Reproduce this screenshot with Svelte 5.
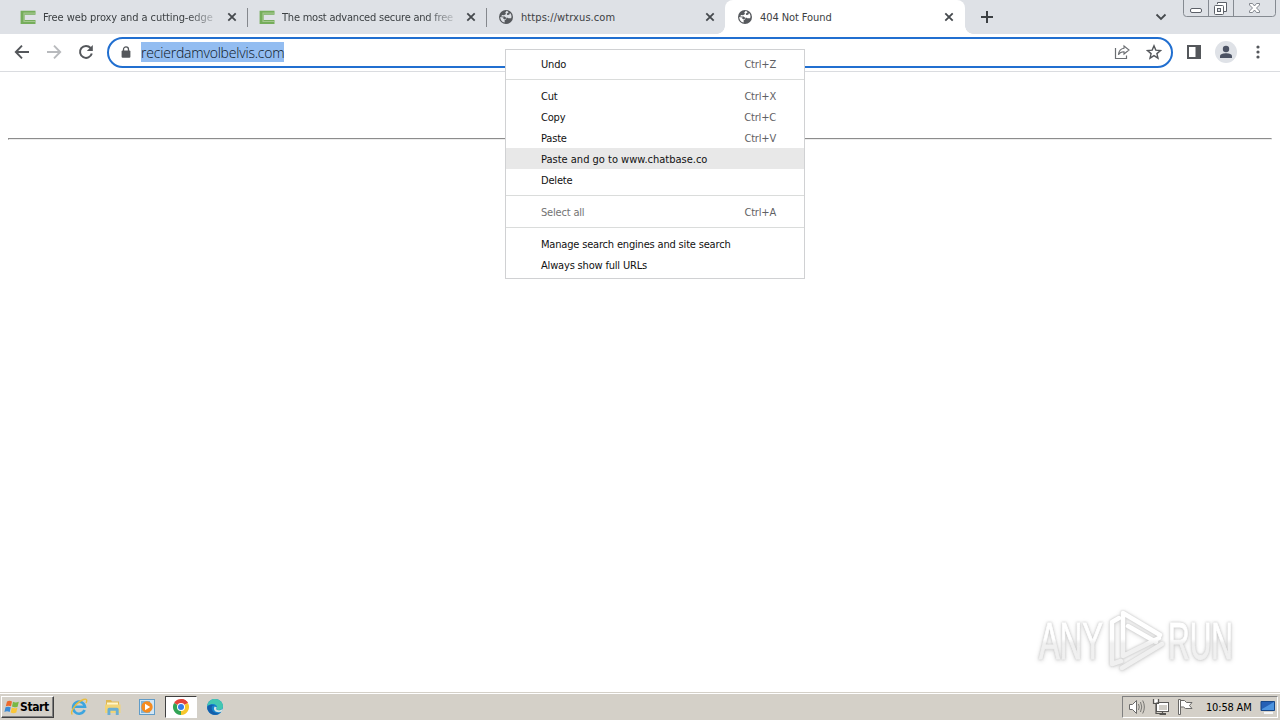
<script>
    const tabs = [
        { title: "Free web proxy and a cutting-edge", icon: "green" },
        { title: "The most advanced secure and free", icon: "green", tight: true },
        { title: "https://wtrxus.com", icon: "globe", wide: true },
        { title: "404 Not Found", icon: "globe", active: true }
    ];

    const menu = [
        [{ label: "Undo", keys: "Ctrl+Z" }],
        [
            { label: "Cut", keys: "Ctrl+X" },
            { label: "Copy", keys: "Ctrl+C" },
            { label: "Paste", keys: "Ctrl+V" },
            { label: "Paste and go to www.chatbase.co", hover: true },
            { label: "Delete" }
        ],
        [{ label: "Select all", keys: "Ctrl+A", disabled: true }],
        [
            { label: "Manage search engines and site search" },
            { label: "Always show full URLs" }
        ]
    ];
</script>

<div class="screen">
    <header class="tabstrip">
        {#each tabs as tab, i}
            <div class="tab" class:active={tab.active} class:line={i < 2}>
                {#if tab.icon === "green"}
                    <svg class="favicon" width="16" height="16" viewBox="0 0 16 16">
                        <path d="M15.5 3.7H2.6V13H15.5" fill="none" stroke="#75ad5b" stroke-width="4" />
                        <path d="M15 4.2H4V12.5H15" fill="none" stroke="#a3c78e" stroke-width="1.2" />
                    </svg>
                {:else}
                    <svg class="favicon" width="16" height="16" viewBox="0 0 16 16">
                        <circle cx="8" cy="8" r="7" fill="#56595d" />
                        <path d="M8.8 1.8 7.3 3.5 8 5 6 6.2 4 6.1 3.2 7.5 6.8 7.6 8.6 9.2 8 10.5 6.6 11.2 6.7 13.6C3.9 13 2.3 10.9 2.2 8L5.6 8.6 5.2 9.8 7 10.4 9 8.6 10.4 9.3 13.1 9.3C14 7.5 13.3 5 12 3.9L11.2 5.8 9.2 6 8.7 4.7 10.7 3.2Z" fill={tab.active ? "#fff" : "#dee1e6"} />
                    </svg>
                {/if}
                <span class="title" class:fade={i < 2} class:wide={tab.wide} class:tight={tab.tight}>{tab.title}</span>
                <svg class="close" width="10" height="10" viewBox="0 0 10 10">
                    <path d="M1.3 1.3 8.7 8.7M8.7 1.3 1.3 8.7" stroke="#45494d" stroke-width="1.8" />
                </svg>
            </div>
        {/each}
        <svg class="plus" width="12" height="12" viewBox="0 0 12 12">
            <path d="M6 0V12M0 6H12" stroke="#3c4043" stroke-width="2" />
        </svg>
        <svg class="chevron" width="12" height="8" viewBox="0 0 12 8">
            <path d="M1.5 1.5 6 6 10.5 1.5" fill="none" stroke="#45494d" stroke-width="1.8" />
        </svg>
        <svg class="controls" width="94" height="18" viewBox="0 0 94 18">
            <path d="M.5 0V13.5Q.5 16.5 3.5 16.5H89.5Q92.5 16.5 92.5 13.5V0M25.5 0V16M50.5 0V16" fill="none" stroke="#858a91" />
            <rect x="7.5" y="8.5" width="11" height="4" rx="1.5" fill="#fff" stroke="#5c6068" />
            <path d="M34.5 4V2.5H43.5V11.5H41" fill="#fff" stroke="#5c6068" />
            <rect x="31.5" y="5.5" width="9" height="9" rx="1" fill="#fff" stroke="#5c6068" />
            <rect x="34.5" y="8.5" width="3" height="3" fill="#dee1e6" stroke="#5c6068" />
            <path d="M66.5 3.5H69.5L71.5 6 73.5 3.5H76.5V5L73.5 8 76.5 11V12.5H73.5L71.5 10 69.5 12.5H66.5V11L69.5 8 66.5 5Z" fill="#fff" stroke="#777c83" stroke-width=".9" />
        </svg>
    </header>

    <div class="toolbar">
        <svg class="nav back" width="16" height="16" viewBox="0 0 16 16">
            <path d="M15 8H2M8 1.7 1.8 8 8 14.3" fill="none" stroke="#54575b" stroke-width="1.9" />
        </svg>
        <svg class="nav" width="16" height="16" viewBox="0 0 16 16">
            <path d="M1 8H14M8 1.7 14.2 8 8 14.3" fill="none" stroke="#b8babd" stroke-width="1.9" />
        </svg>
        <svg class="nav" width="16" height="16" viewBox="0 0 16 16">
            <path d="M12.6 4A6 6 0 1 0 13.8 9.5" fill="none" stroke="#54575b" stroke-width="2" />
            <path d="M14.8 1V7H8.8Z" fill="#54575b" />
        </svg>
        <div class="omnibox">
            <svg class="lock" width="10" height="12" viewBox="0 0 10 12">
                <path d="M2.5 5V3.4A2.5 2.5 0 0 1 7.5 3.4V5" fill="none" stroke="#54575b" stroke-width="1.3" />
                <rect x=".6" y="4.4" width="8.8" height="7.4" rx="1" fill="#54575b" />
            </svg>
            <span class="url">recierdamvolbelvis.com</span>
            <svg class="share" width="16" height="16" viewBox="0 0 16 16">
                <path d="M1.5 4V14.5H12.5V11.5" fill="none" stroke="#6b6e72" stroke-width="1.2" />
                <path d="M10 2 15 6 10 10V7.8C7.5 7.7 5.7 8.7 4.4 10.7 4.8 7.4 6.6 4.8 10 4.3Z" fill="none" stroke="#6b6e72" stroke-width="1.1" />
            </svg>
            <svg width="16" height="16" viewBox="0 0 16 16">
                <path d="M8 1.8 9.8 6.1 14.5 6.5 10.9 9.6 12 14.2 8 11.7 4 14.2 5.1 9.6 1.5 6.5 6.2 6.1Z" fill="none" stroke="#54575b" stroke-width="1.4" />
            </svg>
        </div>
        <svg class="panel" width="14" height="14" viewBox="0 0 14 14">
            <path d="M0 0H14V14H0ZM2 2V12H8.5V2Z" fill="#54575b" fill-rule="evenodd" />
        </svg>
        <svg class="avatar" width="22" height="22" viewBox="0 0 22 22">
            <circle cx="11" cy="11" r="11" fill="#dfe2e7" />
            <circle cx="11" cy="8" r="3.2" fill="#4c5364" />
            <path d="M5 17V15.2C5 13 8.5 12.2 11 12.2S17 13 17 15.2V17Z" fill="#4c5364" />
        </svg>
        <svg class="more" width="4" height="14" viewBox="0 0 4 14">
            <circle cx="2" cy="2" r="1.6" fill="#54575b" />
            <circle cx="2" cy="7" r="1.6" fill="#54575b" />
            <circle cx="2" cy="12" r="1.6" fill="#54575b" />
        </svg>
    </div>

    <main>
        <hr />
        <svg class="watermark" width="210" height="72" viewBox="0 0 210 72">
            <defs>
                <linearGradient id="tone" gradientUnits="userSpaceOnUse" x1="0" y1="0" x2="0" y2="72">
                    <stop offset=".5" stop-color="#fff" />
                    <stop offset=".56" stop-color="#f0f0f0" />
                </linearGradient>
            </defs>
            <g class="mark">
                <text x="9" y="56" textLength="64" lengthAdjust="spacingAndGlyphs">ANY</text>
                <text x="138" y="56" textLength="65" lengthAdjust="spacingAndGlyphs">RUN</text>
                <path d="M130 32 93 10V53L129 35M98 23 126 39" />
                <path d="M89 15 82 19V61L91 58M132 41 92 65" />
            </g>
        </svg>
    </main>

    <footer class="taskbar">
        <div class="start">
            <svg width="16" height="16" viewBox="0 0 16 16">
                <path d="M3 2.5Q5.5 1 8 2.5L7 7.3Q4.3 6 1.8 7.3Z" fill="#ed6a2c" />
                <path d="M9 2.8Q11.5 4.2 14.8 2.8L13.6 7.7Q10.5 8.9 8 7.6Z" fill="#79b843" />
                <path d="M1.5 8.3Q4 7 6.7 8.3L5.7 13Q3 11.6.4 13Z" fill="#3b8bd6" />
                <path d="M7.8 8.6Q10.3 9.9 13.4 8.7L12.3 13.5Q9.3 14.8 6.7 13.4Z" fill="#fac637" />
            </svg>
            <span>Start</span>
        </div>
        <div class="task">
            <svg width="18" height="18" viewBox="0 0 18 18">
                <path d="M14.6 12A6 6 0 1 1 15 8.8H4.5" fill="none" stroke="#3da5df" stroke-width="2.6" />
                <path d="M2.4 16.5C-.8 14.2 6.5 4 13.5 1.5 17 .3 17.3 2.4 16 5" fill="none" stroke="#e9bd3c" stroke-width="1.4" />
            </svg>
        </div>
        <div class="task">
            <svg width="18" height="18" viewBox="0 0 18 18">
                <path d="M2 2H7L8 3.5H15V14H2Z" fill="#dfb853" />
                <path d="M3 4.5H14V8H3Z" fill="#fff6c9" />
                <path d="M1 6.5H16.5V15H1Z" fill="#f1d478" />
                <path d="M3.5 17V11.5Q3.5 9.8 5.2 9.8H13Q14.7 9.8 14.7 11.5V17H11.8V12.8H6.4V17Z" fill="#69aed3" />
            </svg>
        </div>
        <div class="task">
            <svg width="18" height="18" viewBox="0 0 18 18">
                <rect x="1.5" y="1.5" width="15" height="15" fill="#d2e6f4" stroke="#609cc8" />
                <rect x="3" y="3" width="9" height="12" fill="#7eb3d9" />
                <circle cx="9" cy="9" r="5.7" fill="#f58b1f" />
                <path d="M7 5.8 12.2 9 7 12.2Z" fill="#fff" />
            </svg>
        </div>
        <div class="task pressed">
            <svg width="18" height="18" viewBox="0 0 18 18">
                <path d="M9 9 2.07 5A8 8 0 0 1 15.93 5Z" fill="#e4443a" />
                <path d="M9 9 15.93 5A8 8 0 0 1 9 17Z" fill="#f7c72b" />
                <path d="M9 9V17A8 8 0 0 1 2.07 5Z" fill="#32a455" />
                <path d="M9 5H15.93A8 8 0 0 0 9 1Z" fill="#e4443a" />
                <circle cx="9" cy="9" r="4" fill="#fff" />
                <circle cx="9" cy="9" r="3" fill="#347de8" />
            </svg>
        </div>
        <div class="task">
            <svg width="18" height="18" viewBox="0 0 18 18">
                <circle cx="9" cy="9" r="8" fill="#1683cd" />
                <path d="M1.2 8C2 3.5 5 1 9 1 13.5 1 17 4.3 17 8.2 17 11 14.7 12.2 12.2 12 10 11.8 10.3 10.5 11 9.4 11.5 6.8 6.7 3.8 1.2 8Z" fill="#43c7b1" />
                <path d="M6 8.3C4.5 12 8 16 13.8 15.2 9 18.8 2.2 16.2 1.2 10 1.4 7.2 5 6 8.5 7.4 7.2 7.2 6.4 7.5 6 8.3Z" fill="#145eaa" />
                <path d="M10.8 9.5C9.5 11 10.5 12.2 12.4 12.3 14 12.4 16 11.8 17 10.5L16 13.5Q12.5 15 9.5 13.5C7.6 12.4 7.5 10 8.7 8.6Z" fill="#d4e6e5" />
            </svg>
        </div>
        <div class="tray">
            <svg width="18" height="18" viewBox="0 0 18 18">
                <path d="M1.5 6.5H4.5L8.5 2.5V15.5L4.5 11.5H1.5Z" fill="#fff" stroke="#6a6a69" />
                <path d="M10.5 6Q12 9 10.5 12M12.5 4Q15 9 12.5 14M14.7 2.5Q18 9 14.7 15.5" fill="none" stroke="#777672" />
            </svg>
            <svg width="18" height="18" viewBox="0 0 18 18">
                <rect x="4.5" y="4.5" width="12" height="9" fill="#fff" stroke="#5b5a58" />
                <rect x="7" y="7" width="8" height="5" fill="#d0cdc6" />
                <path d="M1.5 1V5.5H6.5V1M4 5.5V15.5H14M10.5 13.5V16M7.5 16.5H14" fill="none" stroke="#555451" stroke-width="1.2" />
                <path d="M2.5 1.5H5.5V4.5H2.5Z" fill="#fff" />
            </svg>
            <svg width="18" height="18" viewBox="0 0 18 18">
                <path d="M3.5 2.5H8.5L10.5 4.5H16L13.5 7.5 16 10.5H9.5L7.5 9H4.5" fill="#fff" stroke="#6a6967" />
                <path d="M2.5 1.5H4.5V16.5H2.5Z" fill="#fff" stroke="#6a6967" />
            </svg>
            <span class="clock">10:58 AM</span>
            <svg class="desktop" width="16" height="16" viewBox="0 0 16 16">
                <path d="M1 2.5H14.5V11.5H1Z" fill="#2560b5" stroke="#174787" />
                <path d="M2 10 14 3V11H2Z" fill="#4d94df" />
                <path d="M4 14H13" stroke="#f4f6f8" stroke-width="2" />
            </svg>
        </div>
    </footer>

    <div class="menu">
        {#each menu as group}
            <div class="group">
                {#each group as item}
                    <div class="item" class:hover={item.hover} class:disabled={item.disabled}>
                        <span>{item.label}</span>
                        {#if item.keys}<span class="keys">{item.keys}</span>{/if}
                    </div>
                {/each}
            </div>
        {/each}
    </div>
</div>

<style>
    :global(body) {
        overflow: hidden;
    }

    .screen {
        position: relative;
        display: flex;
        flex-direction: column;
        width: 1280px;
        height: 720px;
        background: #fff;
        font: 11px/14px "DejaVu Sans Condensed", "DejaVu Sans", sans-serif;
        font-stretch: condensed;
        letter-spacing: -0.18px;
        white-space: nowrap;
    }

    svg {
        display: block;
        flex: none;
    }

    .tabstrip {
        display: flex;
        align-items: center;
        box-sizing: border-box;
        height: 34px;
        padding-left: 8px;
        background: #dee1e6;
    }

    .tab {
        position: relative;
        display: flex;
        align-items: center;
        box-sizing: border-box;
        width: 239px;
        height: 34px;
        padding: 0 10px 0 12px;
        color: #3c4043;
    }

    .tab.line::after {
        content: "";
        position: absolute;
        right: -1px;
        top: 8px;
        width: 1px;
        height: 19px;
        background: #85888d;
    }

    .tab.active {
        width: 240px;
        padding-right: 11px;
        border-radius: 8px 8px 0 0;
        background: #fff;
    }

    .tab.active::before,
    .tab.active::after {
        content: "";
        position: absolute;
        bottom: 0;
        width: 8px;
        height: 8px;
    }

    .tab.active::before {
        left: -8px;
        background: radial-gradient(circle at 0 0, #dee1e6 7.5px, #fff 8px);
    }

    .tab.active::after {
        right: -8px;
        background: radial-gradient(circle at 100% 0, #dee1e6 7.5px, #fff 8px);
    }

    .title {
        width: 178px;
        margin-left: 7px;
        padding-top: 1px;
        letter-spacing: -0.08px;
    }

    .title.wide {
        letter-spacing: 0.08px;
    }

    .title.tight {
        letter-spacing: -0.22px;
    }

    .title.fade {
        mask-image: linear-gradient(to right, #000 145px, transparent 178px);
    }

    .close {
        margin-left: auto;
    }

    .plus {
        margin-left: 16px;
    }

    .chevron {
        margin-left: auto;
    }

    .controls {
        align-self: flex-start;
        margin: 0 3px 0 16px;
    }

    .toolbar {
        display: flex;
        align-items: center;
        box-sizing: border-box;
        height: 38px;
        padding: 0 20px 1px 14px;
        border-bottom: 1px solid #dadce0;
    }

    .nav {
        margin-right: 16px;
    }

    .nav:nth-child(3) {
        margin-right: 13px;
    }

    .omnibox {
        display: flex;
        align-items: center;
        box-sizing: border-box;
        width: 1066px;
        height: 31px;
        padding: 0 9px 0 12px;
        border: 2px solid #216fd0;
        border-radius: 16px;
    }

    .url {
        width: 143px;
        height: 20px;
        margin-left: 10px;
        background: #93bdf1;
        color: #0c1626;
        font-family: "Open Sans", sans-serif;
        font-size: 14px;
        font-stretch: normal;
        font-weight: 300;
        line-height: 21px;
        letter-spacing: -0.2px;
    }

    .share {
        margin-left: auto;
        margin-right: 16px;
    }

    .panel {
        margin-left: 14px;
    }

    .avatar {
        margin-left: 14px;
    }

    .more {
        margin-left: auto;
    }

    main {
        display: flex;
        flex: 1;
        flex-direction: column;
        justify-content: space-between;
        padding: 66px 8px 0;
    }

    hr {
        width: 1264px;
        margin: 0;
        border: 1px solid;
        border-color: #8c8c8c #e8e8e8 #ededed #8c8c8c;
        box-sizing: border-box;
    }

    .watermark {
        align-self: flex-end;
        margin: 0 32px 17px 0;
        overflow: visible;
    }

    .mark {
        filter: drop-shadow(0 0 1px #c4c4c4) drop-shadow(0 1px 2px #ddd);
    }

    .mark text {
        fill: url(#tone);
        stroke: url(#tone);
        stroke-width: 1;
        font: 52px "Liberation Sans", sans-serif;
        letter-spacing: 0;
    }

    .mark path {
        fill: none;
        stroke: url(#tone);
        stroke-width: 4.5;
        stroke-linejoin: round;
        stroke-linecap: round;
    }

    .taskbar {
        display: flex;
        align-items: center;
        box-sizing: border-box;
        height: 28px;
        padding: 2px 2px 0 1px;
        background: #d4d0c8;
        box-shadow: inset 0 1px #d4d0c8, inset 0 2px #fff;
    }

    .start {
        display: flex;
        align-items: center;
        box-sizing: border-box;
        width: 53px;
        height: 22px;
        margin-right: 9px;
        padding-left: 2px;
        border: 1px solid;
        border-color: #fff #404040 #404040 #fff;
        box-shadow: inset -1px -1px #808080;
        color: #000;
        font-size: 12px;
        font-weight: bold;
        letter-spacing: -0.4px;
    }

    .task {
        display: flex;
        align-items: center;
        justify-content: center;
        box-sizing: border-box;
        width: 32px;
        height: 22px;
        margin-right: 2px;
    }

    .task.pressed {
        border: 1px solid;
        border-color: #404040 #fff #fff #404040;
        background: #fff;
    }

    .tray {
        display: flex;
        align-items: center;
        box-sizing: border-box;
        width: 156px;
        height: 22px;
        margin-left: auto;
        padding: 0 0 0 5px;
        border: 1px solid;
        border-color: #808080 #fff #fff #808080;
        gap: 6px;
    }

    .clock {
        width: 48px;
        margin-left: 6px;
        padding-top: 1px;
        color: #000;
    }

    .menu {
        position: absolute;
        left: 505px;
        top: 49px;
        box-sizing: border-box;
        width: 300px;
        height: 230px;
        padding: 3px 0;
        border: 1px solid #d0d1d3;
        background: #fff;
    }

    .group + .group {
        margin-top: 5px;
        padding-top: 5px;
        border-top: 1px solid #dadcdb;
    }

    .item {
        display: flex;
        justify-content: space-between;
        height: 21px;
        padding: 0 28px 0 35px;
        color: #111;
        line-height: 23px;
    }

    .item.hover {
        background: #e8e8e8;
        letter-spacing: 0;
    }

    .item.disabled {
        color: #737373;
    }

    .keys {
        color: #5f6164;
    }
</style>
